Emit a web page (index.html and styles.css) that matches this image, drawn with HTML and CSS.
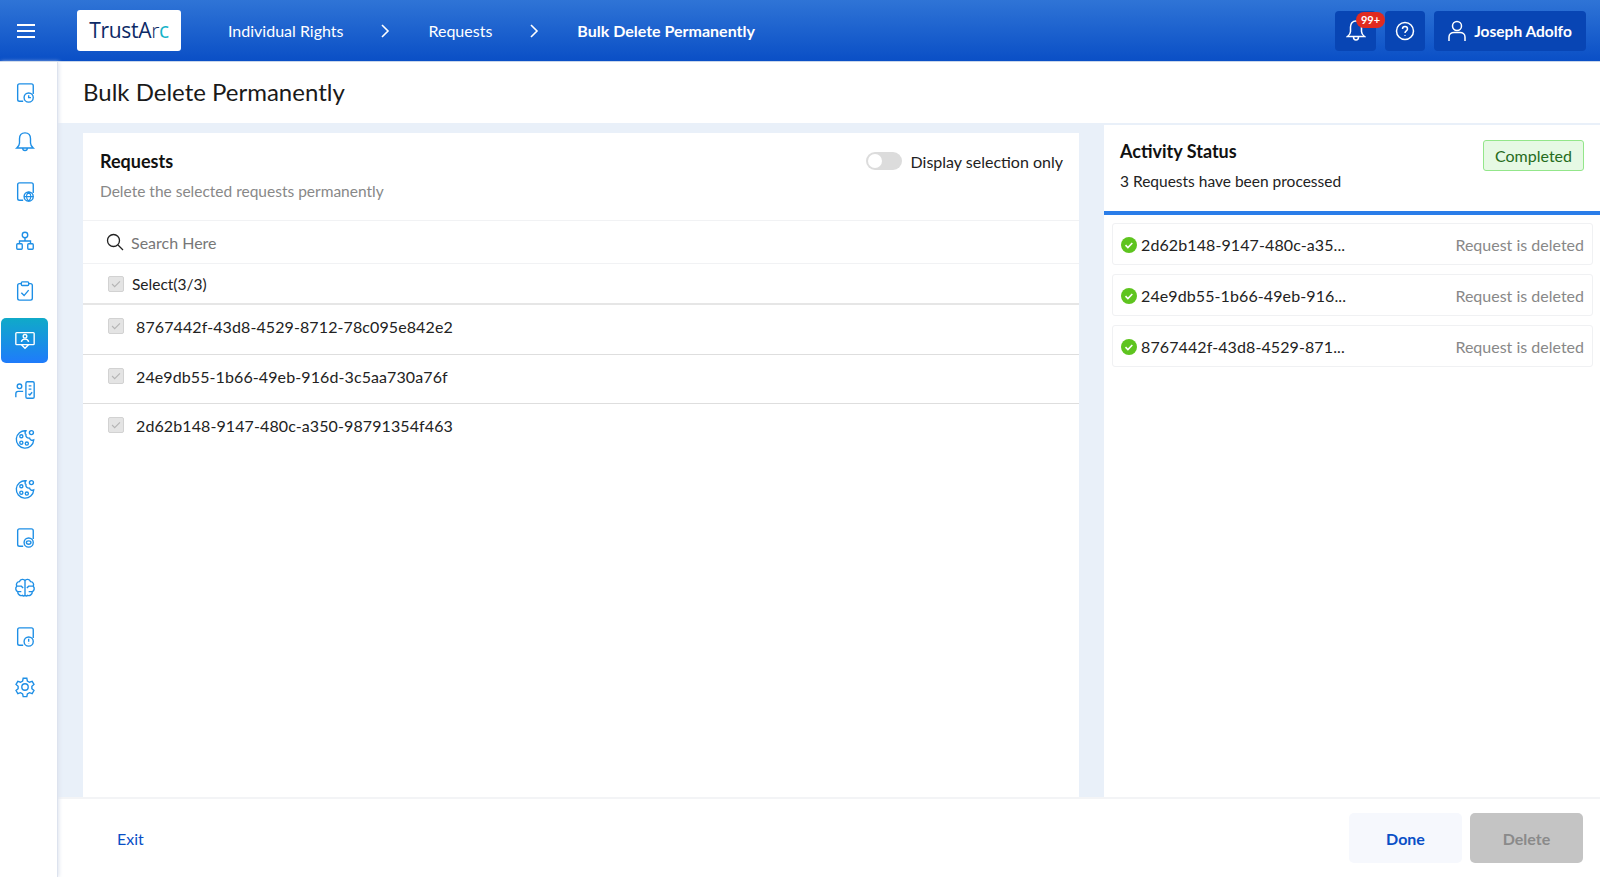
FILE: index.html

```html
<!DOCTYPE html>
<html lang="en">
<head>
  <meta charset="UTF-8" />
  <title>Bulk Delete Permanently</title>
  <link rel="stylesheet" href="styles.css">
</head>
<body>
  <svg class="defs" width="0" height="0">
    <defs>
      <linearGradient id="grad" x1="0" y1="0" x2="0" y2="1">
        <stop offset="0" stop-color="#18a8c6" />
        <stop offset="1" stop-color="#1f78f5" />
      </linearGradient>
    </defs>
  </svg>

  <header class="topbar">
    <button class="menu-btn" aria-label="Menu">
      <svg width="20" height="16" viewBox="0 0 20 16"><path d="M1 2h18M1 8h18M1 14h18" /></svg>
    </button>
    <div class="logo"><span class="logo-dark">TrustA</span><span class="logo-r">r</span><span class="logo-c">c</span></div>
    <nav class="crumbs">
      <span>Individual Rights</span>
      <svg class="chev" width="10" height="14" viewBox="0 0 10 14"><path d="M2 1l6 6-6 6" /></svg>
      <span>Requests</span>
      <svg class="chev" width="10" height="14" viewBox="0 0 10 14"><path d="M2 1l6 6-6 6" /></svg>
      <span class="crumb-current">Bulk Delete Permanently</span>
    </nav>
    <div class="top-actions">
      <div class="top-btn bell-btn">
        <svg width="20" height="24" viewBox="0 0 20 24"><path d="M10 2c-3.600 0-5.500 2.700-5.500 6v4.500c0 2-1 3.500-3 5h17c-2-1.500-3-3-3-5V8c0-3.300-1.900-6-5.500-6zM7.500 18c0 4 5 4 5 0" /></svg>
        <span class="badge">99+</span>
      </div>
      <div class="top-btn help-btn">
        <svg width="20" height="20" viewBox="0 0 20 20"><circle cx="10" cy="10" r="8.500" /><path d="M7.500 8c0-3.300 5-3.300 5 0 0 2-2.500 1.800-2.500 4" /><path class="dot" d="M10 14.300v.6" /></svg>
      </div>
      <div class="top-btn user-btn">
        <svg width="18" height="22" viewBox="0 0 18 22"><circle cx="9" cy="6" r="4.500" /><path d="M1 21v-4c0-3 2.500-4.500 5-4.500h6c2.500 0 5 1.500 5 4.500v4" /></svg>
        <span>Joseph Adolfo</span>
      </div>
    </div>
  </header>

  <div class="shell">
    <aside class="sidebar">
      <div class="side-item"><svg viewBox="0 0 24 24"><path d="M10 21H6a2 2 0 0 1-2-2V4a2 2 0 0 1 2-2h13a2 2 0 0 1 2 2v9" /><circle cx="16" cy="17" r="5" /><path d="M16 14.500V17h2.500" /></svg></div>
      <div class="side-item"><svg viewBox="0 0 24 24"><path d="M12 2c-4 0-6 3-6 6.500V13c0 2.500-1.300 4-3 5.500h18c-1.700-1.500-3-3-3-5.500V8.500C18 5 16 2 12 2zM9.500 18.500c0 3.700 5 3.700 5 0" /></svg></div>
      <div class="side-item"><svg viewBox="0 0 24 24"><path d="M10 21H6a2 2 0 0 1-2-2V4a2 2 0 0 1 2-2h13a2 2 0 0 1 2 2v9" /><circle cx="16" cy="17" r="5" /><path d="M11 17h10M16 12c-3 3-3 7 0 10M16 12c3 3 3 7 0 10" /></svg></div>
      <div class="side-item"><svg viewBox="0 0 24 24"><circle cx="12" cy="5.500" r="3" /><rect x="3" y="15" width="6" height="6" rx="1" /><rect x="15" y="15" width="6" height="6" rx="1" /><path d="M12 8.500V12M6 15v-3h12v3" /></svg></div>
      <div class="side-item"><svg viewBox="0 0 24 24"><path d="M8 4H6a2 2 0 0 0-2 2v14a2 2 0 0 0 2 2h12a2 2 0 0 0 2-2V6a2 2 0 0 0-2-2h-2" /><rect x="8" y="2" width="8" height="4" rx="1" /><path d="M8 14l3 3 5-6" /></svg></div>
      <div class="side-item active"><svg viewBox="0 0 24 24"><path d="M8 17H3a1 1 0 0 1-1-1V5a1 1 0 0 1 1-1h18a1 1 0 0 1 1 1v11a1 1 0 0 1-1 1h-5" /><circle cx="12" cy="8" r="2" /><path d="M8 14c.5-2 2-3 4-3s3.500 1 4 3M8 17h8l-4 4z" /></svg></div>
      <div class="side-item"><svg viewBox="0 0 24 24"><circle cx="6" cy="8" r="2.500" /><path d="M2 20v-4c0-1.500 1-2.500 2.500-2.500H10" /><rect x="13" y="3" width="9" height="18" rx="1.500" /><path d="M16 7.500h3M16 11h3M15.800 16l1.500 1.500 2.500-3" /></svg></div>
      <div class="side-item"><svg viewBox="0 0 24 24"><path d="M13 3a9.500 9.500 0 1 0 8.500 10c-2 1-4 0-4.500-2-2.500.5-4.500-1.500-4-4-1.500-.5-1-2.500 0-4z" /><circle cx="8" cy="9" r="1.700" /><circle cx="8" cy="16" r="1.700" /><circle cx="14" cy="17" r="1.700" /><circle cx="19" cy="5" r="2.200" /></svg></div>
      <div class="side-item"><svg viewBox="0 0 24 24"><path d="M13 3a9.500 9.500 0 1 0 8.500 10c-2 1-4 0-4.500-2-2.500.5-4.500-1.500-4-4-1.500-.5-1-2.500 0-4z" /><circle cx="8" cy="9" r="1.700" /><circle cx="8" cy="16" r="1.700" /><circle cx="14" cy="17" r="1.700" /><circle cx="19" cy="5" r="2.200" /></svg></div>
      <div class="side-item"><svg viewBox="0 0 24 24"><path d="M10 21H6a2 2 0 0 1-2-2V4a2 2 0 0 1 2-2h13a2 2 0 0 1 2 2v9" /><circle cx="16" cy="17" r="5" /><ellipse cx="16" cy="17" rx="2.500" ry="1.800" /></svg></div>
      <div class="side-item"><svg viewBox="0 0 24 24"><path d="M12 4c-1-2-5-2-6 1-3 0-4 3-3 5-2 2-1 5 1 6 0 3 3 5 5 4 1 1 2 1 3 0 1 1 2 1 3 0 2 1 5-1 5-4 2-1 3-4 1-6 1-2 0-5-3-5-1-3-5-3-6-1zM12 4v16M3 10h5l2 2M21 10h-5l-2 2M4 16h4M20 16h-4" /></svg></div>
      <div class="side-item"><svg viewBox="0 0 24 24"><path d="M10 21H6a2 2 0 0 1-2-2V4a2 2 0 0 1 2-2h13a2 2 0 0 1 2 2v9" /><circle cx="16" cy="17" r="5" /><path d="M16 14v3.200M16 19.300v.3" /></svg></div>
      <div class="side-item"><svg viewBox="0 0 24 24"><circle cx="12" cy="12" r="3.500" /><path d="M10 2.500h4l.6 3 2.300 1.300 2.900-1 2 3.400-2.300 2 .0 2.600 2.300 2-2 3.400-2.900-1-2.300 1.300-.6 3h-4l-.6-3-2.300-1.300-2.900 1-2-3.400 2.300-2v-2.600l-2.300-2 2-3.400 2.900 1 2.300-1.300z" /></svg></div>
    </aside>

    <div class="main">
      <h1 class="page-title">Bulk Delete Permanently</h1>

      <div class="content">
        <section class="requests">
          <div class="req-head">
            <div>
              <h2>Requests</h2>
              <p class="muted">Delete the selected requests permanently</p>
            </div>
            <div class="switch-wrap">
              <span class="switch"><span class="knob"></span></span>
              <span>Display selection only</span>
            </div>
          </div>
          <div class="search-row">
            <svg width="18" height="18" viewBox="0 0 18 18"><circle cx="7.500" cy="7.500" r="6" /><path d="M12 12l5 5" /></svg>
            <span>Search Here</span>
          </div>
          <div class="select-row">
            <span class="check"><svg viewBox="0 0 16 16"><path d="M3.500 8l3 3 6-6" /></svg></span>
            <span>Select(3/3)</span>
          </div>
          <div class="req-row">
            <span class="check"><svg viewBox="0 0 16 16"><path d="M3.500 8l3 3 6-6" /></svg></span>
            <span>8767442f-43d8-4529-8712-78c095e842e2</span>
          </div>
          <div class="req-row">
            <span class="check"><svg viewBox="0 0 16 16"><path d="M3.500 8l3 3 6-6" /></svg></span>
            <span>24e9db55-1b66-49eb-916d-3c5aa730a76f</span>
          </div>
          <div class="req-row">
            <span class="check"><svg viewBox="0 0 16 16"><path d="M3.500 8l3 3 6-6" /></svg></span>
            <span>2d62b148-9147-480c-a350-98791354f463</span>
          </div>
        </section>

        <section class="activity">
          <div class="act-head">
            <div>
              <h2>Activity Status</h2>
              <p>3 Requests have been processed</p>
            </div>
            <span class="status-tag">Completed</span>
          </div>
          <div class="act-list">
            <div class="act-item">
              <svg class="ok" width="16" height="16" viewBox="0 0 16 16"><circle cx="8" cy="8" r="8" /><path d="M4.500 8.200l2.400 2.300 4.400-4.500" /></svg>
              <span class="act-id">2d62b148-9147-480c-a35...</span>
              <span class="act-msg">Request is deleted</span>
            </div>
            <div class="act-item">
              <svg class="ok" width="16" height="16" viewBox="0 0 16 16"><circle cx="8" cy="8" r="8" /><path d="M4.500 8.200l2.400 2.300 4.400-4.500" /></svg>
              <span class="act-id">24e9db55-1b66-49eb-916...</span>
              <span class="act-msg">Request is deleted</span>
            </div>
            <div class="act-item">
              <svg class="ok" width="16" height="16" viewBox="0 0 16 16"><circle cx="8" cy="8" r="8" /><path d="M4.500 8.200l2.400 2.300 4.400-4.500" /></svg>
              <span class="act-id">8767442f-43d8-4529-871...</span>
              <span class="act-msg">Request is deleted</span>
            </div>
          </div>
        </section>
      </div>

      <footer class="footer">
        <a class="exit">Exit</a>
        <div class="foot-btns">
          <button class="btn-done">Done</button>
          <button class="btn-delete" disabled>Delete</button>
        </div>
      </footer>
    </div>
  </div>
</body>
</html>
```

FILE: styles.css

```css
* { box-sizing: border-box; }
html, body { height: 100%; }
body { margin: 0; font-family: Lato, "Open Sans", sans-serif; font-size: 16px; color: #222; background: #fff; overflow: hidden; display: flex; flex-direction: column; }
svg { fill: none; }
.defs { position: absolute; }
h1, h2, p { margin: 0; }

.topbar { height: 62px; flex: none; display: flex; align-items: center; color: #fff; background: linear-gradient(180deg, #2f74d6 0%, #0a4fc6 100%); border-bottom: 1px solid #c9d6ea; }
.menu-btn { width: 50px; height: 50px; background: none; border: 0; padding: 0 0 0 1px; display: flex; align-items: center; justify-content: center; }
.menu-btn svg path { stroke: #fff; stroke-width: 1.800; }
.logo { width: 104px; height: 41px; margin-left: 27px; background: #fff; border-radius: 3px; display: flex; align-items: center; justify-content: center; font-size: 21px; letter-spacing: -0.3px; font-family: "Open Sans", sans-serif; padding-bottom: 1px; }
.logo-dark { color: #0d2a66; }
.logo-r { color: #0d2a66; font-weight: 300; }
.logo-c { color: #16b3c9; }
.crumbs { display: flex; align-items: center; margin-left: 47px; font-size: 16px; }
.chev { margin: 0 38px 0 37px; }
.chev path { stroke: #fff; stroke-width: 1.600; }
.crumb-current { font-weight: 700; }
.top-actions { margin-left: auto; margin-right: 14px; display: flex; gap: 9px; }
.top-btn { position: relative; height: 40px; background: #0845b4; border-radius: 4px; display: flex; align-items: center; justify-content: center; }
.top-btn svg path, .top-btn svg circle { stroke: #fff; stroke-width: 1.500; }
.bell-btn { width: 41px; }
.help-btn { width: 40px; }
.user-btn { width: 152px; gap: 8px; font-weight: 700; font-size: 15.500px; }
.badge { position: absolute; top: 1px; left: 21px; width: 29px; height: 16px; border-radius: 8px; background: #e02b20; color: #fff; font-size: 11px; font-weight: 700; text-align: center; line-height: 16px; }

.shell { flex: 1; display: flex; min-height: 0; }
.sidebar { width: 58px; flex: none; padding-top: 8px; background: #fff; border-right: 1px solid #dde3ee; box-shadow: 1px 0 4px #dde3ee; position: relative; z-index: 1; }
.side-item { width: 47px; height: 45px; margin: 0 0 4.500px 1px; border-radius: 5px; display: flex; align-items: center; justify-content: center; }
.side-item svg { width: 22px; height: 22px; stroke: url(#grad); stroke-width: 1.500; }
.side-item svg * { stroke: #1e8fe6; }
.side-item.active { background: linear-gradient(180deg, #10aac8 0%, #1f7bfb 100%); }
.side-item.active svg * { stroke: #fff; }

.main { flex: 1; min-width: 0; display: flex; flex-direction: column; }
.page-title { height: 61px; flex: none; padding: 0 0 2px 25px; display: flex; align-items: center; font-size: 24px; font-weight: 400; color: #1a1a1a; }
.content { flex: 1; min-height: 0; display: flex; background: #e9f0f9; }
.requests { width: 996px; margin: 10px 0 0 25px; background: #fff; }
.req-head { height: 88px; padding: 17px 16px 0 17px; display: flex; justify-content: space-between; border-bottom: 1px solid #f1f2f4; }
.requests h2, .activity h2 { font-size: 18px; font-weight: 700; color: #111; }
.muted { margin-top: 10px; color: #888; font-size: 15.500px; }
.switch-wrap { display: flex; align-items: center; gap: 9px; height: 22px; margin-top: 0; font-size: 16px; }
.switch { width: 36px; height: 18px; border-radius: 9px; background: #dcdcdc; padding: 2px; }
.knob { display: block; width: 14px; height: 14px; border-radius: 50%; background: #fff; }
.search-row { height: 43px; padding-left: 23px; display: flex; align-items: center; gap: 7px; color: #777; font-size: 16px; border-bottom: 1px solid #f1f2f4; }
.search-row svg * { stroke: #222; stroke-width: 1.300; }
.select-row { height: 41px; padding-left: 25px; display: flex; align-items: center; gap: 8px; font-size: 15.500px; border-bottom: 2px solid #e6e6e6; }
.check { width: 16px; height: 16px; flex: none; background: #e4e4e4; border: 1px solid #d2d2d2; border-radius: 2px; display: block; }
.check svg { display: block; width: 14px; height: 14px; }
.check svg path { stroke: #b5b5b5; stroke-width: 1.300; }
.req-row { height: 49.500px; padding: 12px 0 0 25px; display: flex; align-items: flex-start; gap: 12px; font-size: 16px; letter-spacing: 0.1px; border-bottom: 1px solid #dedede; }
.req-row .check { margin-top: 1px; }
.req-row:last-child { border-bottom: 0; }

.activity { width: 496px; margin-left: auto; margin-top: 2px; background: #fff; }
.act-head { height: 90px; padding: 15px 16px 0 16px; display: flex; justify-content: space-between; align-items: flex-start; border-bottom: 4px solid #2a7de9; }
.act-head p { margin-top: 10px; font-size: 15.500px; color: #222; }
.status-tag { width: 101px; height: 31px; border: 1px solid #93e68a; border-radius: 3px; background: #e6f9e4; color: #256b20; font-size: 16px; display: flex; align-items: center; justify-content: center; }
.act-list { padding: 8px 7px 0 8px; display: flex; flex-direction: column; gap: 9px; }
.act-item { height: 42px; padding: 0 8px 0 8px; border: 1px solid #f0f1f3; border-radius: 3px; display: flex; align-items: center; font-size: 16px; }
.ok { flex: none; margin-top: 2px; }
.ok circle { fill: #5ec41f; }
.ok path { stroke: #fff; stroke-width: 1.600; }
.act-id { margin-left: 4px; letter-spacing: 0.1px; }
.act-msg { margin-left: auto; color: #888; }

.footer { height: 80px; flex: none; padding: 0 17px 0 59px; display: flex; align-items: center; justify-content: space-between; background: #fff; border-top: 2px solid #f3f4f6; }
.exit { color: #0a4fc6; font-size: 16px; }
.foot-btns { display: flex; gap: 8px; }
.foot-btns button { width: 113px; height: 50px; border: 0; border-radius: 5px; font: 700 16px Lato, sans-serif; }
.btn-done { background: #f6f8fd; color: #0a4fc6; }
.btn-delete { background: #c4c4c4; color: #8a8a8a; }
```
